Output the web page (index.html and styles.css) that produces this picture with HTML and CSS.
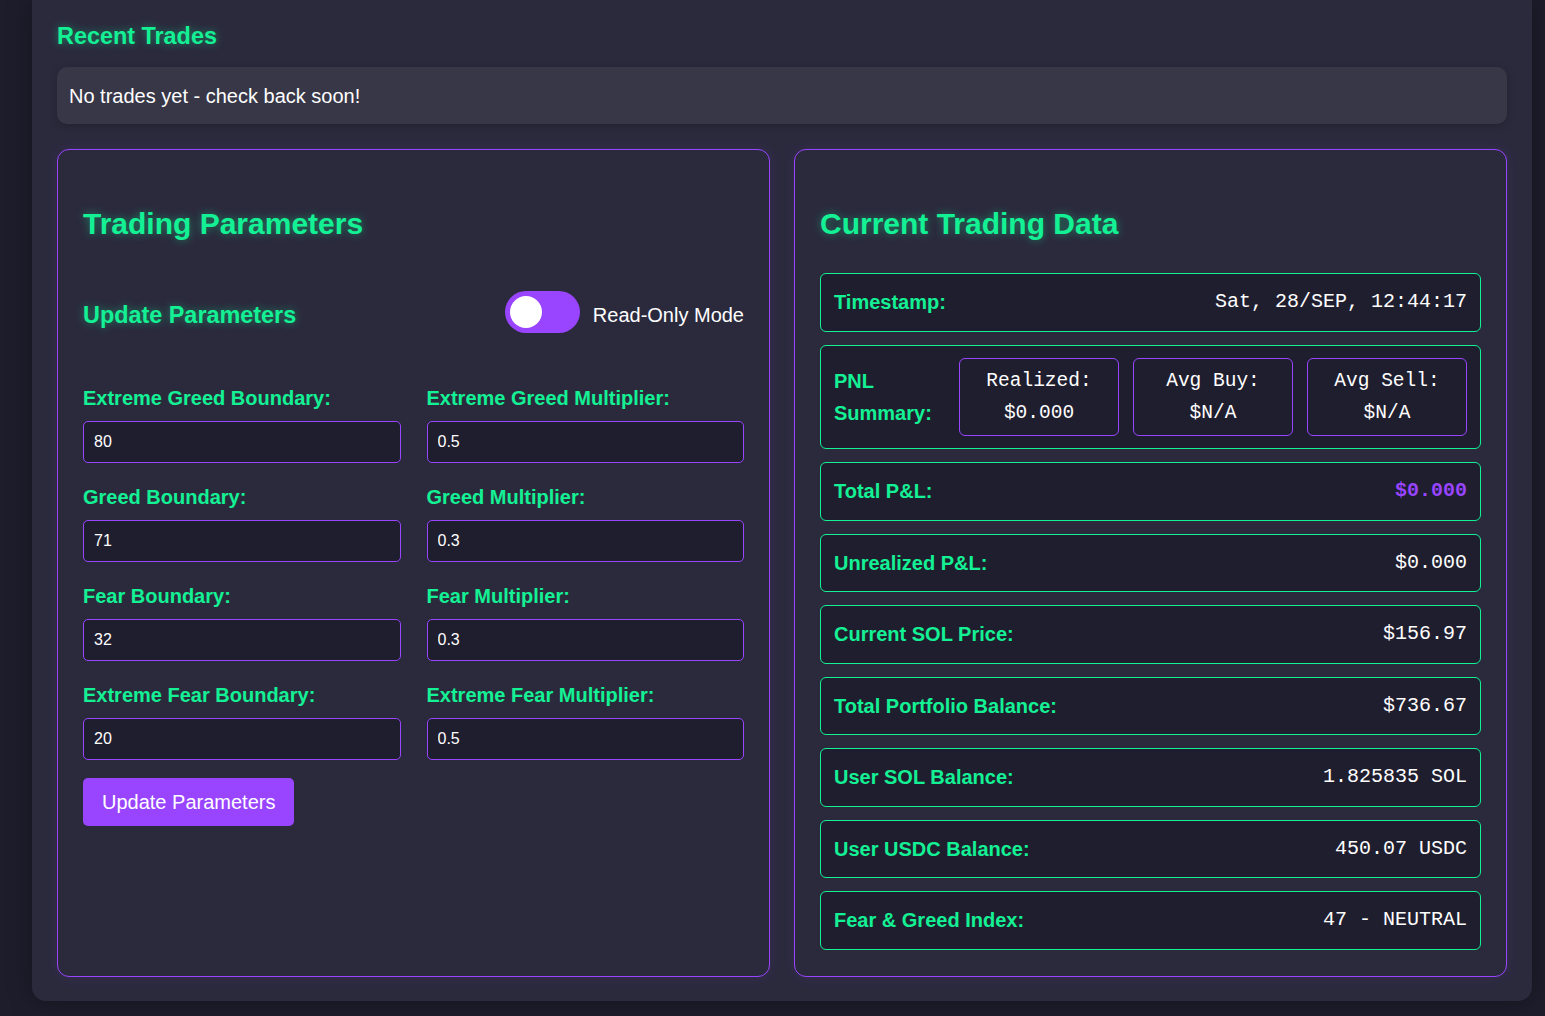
FILE: index.html
```html
<!DOCTYPE html>
<html lang="en">
<head>
<meta charset="utf-8">
<title>Trading Dashboard</title>
<link rel="stylesheet" href="styles.css">
</head>
<body>
<div class="container">
  <h3 class="section-title">Recent Trades</h3>
  <div class="trades-box">No trades yet - check back soon!</div>

  <div class="panels">
    <section class="panel">
      <h2 class="panel-title">Trading Parameters</h2>
      <div class="toggle-row">
        <h3 class="sub-title">Update Parameters</h3>
        <div class="toggle-wrap">
          <span class="toggle"><span class="knob"></span></span>
          <span class="toggle-label">Read-Only Mode</span>
        </div>
      </div>
      <div class="param-grid">
        <div class="field"><label>Extreme Greed Boundary:</label><input type="text" value="80"></div>
        <div class="field"><label>Extreme Greed Multiplier:</label><input type="text" value="0.5"></div>
        <div class="field"><label>Greed Boundary:</label><input type="text" value="71"></div>
        <div class="field"><label>Greed Multiplier:</label><input type="text" value="0.3"></div>
        <div class="field"><label>Fear Boundary:</label><input type="text" value="32"></div>
        <div class="field"><label>Fear Multiplier:</label><input type="text" value="0.3"></div>
        <div class="field"><label>Extreme Fear Boundary:</label><input type="text" value="20"></div>
        <div class="field"><label>Extreme Fear Multiplier:</label><input type="text" value="0.5"></div>
      </div>
      <button class="btn">Update Parameters</button>
    </section>

    <section class="panel">
      <h2 class="panel-title">Current Trading Data</h2>
      <div class="data-list">
        <div class="row"><span class="row-label">Timestamp:</span><span class="row-value">Sat, 28/SEP, 12:44:17</span></div>
        <div class="row pnl">
          <span class="row-label pnl-label">PNL Summary:</span>
          <div class="pnl-box"><div>Realized:</div><div>$0.000</div></div>
          <div class="pnl-box"><div>Avg Buy:</div><div>$N/A</div></div>
          <div class="pnl-box"><div>Avg Sell:</div><div>$N/A</div></div>
        </div>
        <div class="row"><span class="row-label">Total P&amp;L:</span><span class="row-value accent">$0.000</span></div>
        <div class="row"><span class="row-label">Unrealized P&amp;L:</span><span class="row-value">$0.000</span></div>
        <div class="row"><span class="row-label">Current SOL Price:</span><span class="row-value">$156.97</span></div>
        <div class="row"><span class="row-label">Total Portfolio Balance:</span><span class="row-value">$736.67</span></div>
        <div class="row"><span class="row-label">User SOL Balance:</span><span class="row-value">1.825835 SOL</span></div>
        <div class="row"><span class="row-label">User USDC Balance:</span><span class="row-value">450.07 USDC</span></div>
        <div class="row"><span class="row-label">Fear &amp; Greed Index:</span><span class="row-value">47 - NEUTRAL</span></div>
      </div>
    </section>
  </div>
</div>
</body>
</html>
```

FILE: styles.css
```css
html, body {
  margin: 0;
  padding: 0;
}
body {
  background: #1e1d2c;
  font-family: "Liberation Sans", Arial, sans-serif;
  font-size: 20px;
  color: #ffffff;
  min-height: 1016px;
}
.container {
  margin-left: 32px;
  width: 1500px;
  box-sizing: border-box;
  padding: 18px 25px 24px;
  background: #2b2a3d;
  border-radius: 0 0 14px 14px;
  box-shadow: 0 0 24px rgba(0, 0, 0, 0.35);
}
.section-title {
  margin: 0 0 12px;
  font-size: 23.4px;
  line-height: 37px;
  color: #14f195;
  text-shadow: 0 0 8px rgba(20, 241, 149, 0.45);
}
.trades-box {
  background: #383747;
  border-radius: 10px;
  padding: 12.5px 12px;
  line-height: 32px;
  box-shadow: 0 2px 8px rgba(0, 0, 0, 0.2);
}
.panels {
  margin-top: 25px;
  display: grid;
  grid-template-columns: 1fr 1fr;
  column-gap: 24px;
}
.panel {
  border: 1px solid #9945ff;
  border-radius: 12px;
  padding: 25px 25px 26px;
  background: #2b2a3d;
  box-shadow: 0 0 12px rgba(153, 69, 255, 0.12);
}
.panel-title {
  margin: 31px 0 32px;
  font-size: 30px;
  line-height: 35px;
  color: #14f195;
  text-shadow: 0 0 8px rgba(20, 241, 149, 0.45);
}
.toggle-row {
  margin-top: 50px;
  height: 42px;
  display: flex;
  align-items: center;
  justify-content: space-between;
}
.sub-title {
  margin: 0;
  padding-top: 6px;
  font-size: 23.4px;
  color: #14f195;
  text-shadow: 0 0 8px rgba(20, 241, 149, 0.45);
}
.toggle-wrap {
  display: flex;
  align-items: center;
  gap: 13px;
}
.toggle {
  position: relative;
  display: block;
  width: 75px;
  height: 42px;
  border-radius: 21px;
  background: #9945ff;
}
.knob {
  position: absolute;
  left: 5px;
  top: 5px;
  width: 32px;
  height: 32px;
  border-radius: 50%;
  background: #ffffff;
}
.toggle-label {
  padding-top: 6px;
  line-height: 23px;
}
.param-grid {
  margin-top: 53.5px;
  display: grid;
  grid-template-columns: 1fr 1fr;
  column-gap: 26px;
  row-gap: 23px;
}
.field label {
  display: block;
  font-weight: bold;
  color: #14f195;
  line-height: 23px;
  margin-bottom: 11px;
}
.field input {
  display: block;
  width: 100%;
  box-sizing: border-box;
  height: 42px;
  border: 1px solid #9945ff;
  border-radius: 5px;
  background: #1f1e2f;
  color: #ffffff;
  font-family: "Liberation Sans", Arial, sans-serif;
  font-size: 16px;
  padding: 0 10px;
  outline: none;
}
.btn {
  margin-top: 18px;
  display: block;
  border: none;
  border-radius: 5px;
  background: #9945ff;
  color: #ffffff;
  font-family: "Liberation Sans", Arial, sans-serif;
  font-size: 20px;
  line-height: 24px;
  padding: 12px 19px;
}
.data-list {
  display: flex;
  flex-direction: column;
  gap: 13px;
}
.row {
  display: flex;
  align-items: center;
  justify-content: space-between;
  border: 1px solid #14f195;
  border-radius: 6px;
  background: #1f1e2f;
  padding: 12.25px 13px;
  line-height: 32px;
}
.row-label {
  font-weight: bold;
  color: #14f195;
}
.row-value {
  font-family: "Liberation Mono", "Courier New", monospace;
  font-size: 20px;
  color: #ffffff;
}
.row-value.accent {
  color: #9945ff;
  font-weight: bold;
}
.row.pnl {
  gap: 14px;
}
.pnl-label {
  flex: 1;
}
.pnl-box {
  width: 160px;
  box-sizing: border-box;
  border: 1px solid #9945ff;
  border-radius: 6px;
  padding: 6px 0;
  text-align: center;
  font-family: "Liberation Mono", "Courier New", monospace;
  font-size: 19.5px;
  line-height: 32px;
}
```
